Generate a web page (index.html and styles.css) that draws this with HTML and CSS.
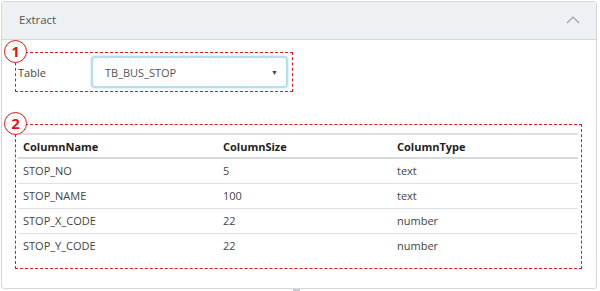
FILE: index.html
```html
<!DOCTYPE html>
<html lang="en">

<head>
    <meta charset="UTF-8">
    <meta name="viewport" content="width=device-width, initial-scale=1.0">
    <title>Extract</title>

    <link rel="stylesheet" href="styles.css">
</head>

<body>
    <div class="panel">
        <div class="panel-header">
            <span>Extract</span>
            <svg class="toggle" width="14" height="8" viewBox="0 0 14 8">
                <polyline points="1,7 7,1 13,7" fill="none" stroke="#9aa3ad" stroke-width="1.2" />
            </svg>
        </div>

        <div class="panel-body">
            <!-- 1: table select -->
            <div class="mark mark-table">
                <span class="badge">1</span>
                <label class="field-label">Table</label>
                <div class="select">
                    <span>TB_BUS_STOP</span>
                    <span class="caret">&#9660;</span>
                </div>
            </div>

            <!-- 2: column list -->
            <div class="mark mark-columns">
                <span class="badge">2</span>
                <table class="grid">
                    <thead>
                        <tr>
                            <th class="c1">ColumnName</th>
                            <th class="c2">ColumnSize</th>
                            <th>ColumnType</th>
                        </tr>
                    </thead>
                    <tbody>
                        <tr>
                            <td>STOP_NO</td>
                            <td>5</td>
                            <td>text</td>
                        </tr>
                        <tr>
                            <td>STOP_NAME</td>
                            <td>100</td>
                            <td>text</td>
                        </tr>
                        <tr>
                            <td>STOP_X_CODE</td>
                            <td>22</td>
                            <td>number</td>
                        </tr>
                        <tr>
                            <td>STOP_Y_CODE</td>
                            <td>22</td>
                            <td>number</td>
                        </tr>
                    </tbody>
                </table>
            </div>
        </div>
    </div>
    <div class="handle"></div>
</body>

</html>
```

FILE: styles.css
```css
* {
    margin: 0;
    padding: 0;
    box-sizing: border-box;
}

body {
    padding: 1px 3px 0 1px;
    font-family: "Open Sans", "Noto Sans", sans-serif;
    font-size: 11px;
    color: #444;
    background: #fff;
}

.panel {
    width: 596px;
    height: 288px;
    border: 1px solid #d5d9de;
    border-radius: 3px;
    overflow: hidden;
}

.panel-header {
    height: 38px;
    padding: 0 16px 2px 17px;
    background-color: #eef1f4;
    border-bottom: 1px solid #d5d9de;
    color: #555;
    font-size: 11.5px;

    display: flex;
    justify-content: space-between;
    align-items: center;
}

.panel-body {
    padding: 12px 15px 0 13px;
}

.mark {
    position: relative;
}

.badge {
    position: absolute;
    top: -13px;
    left: -12px;
    width: 23px;
    height: 23px;
    border: 1.5px solid #e8141a;
    border-radius: 50%;
    background: #fff;
    color: #e8141a;
    font-weight: bold;
    font-size: 15px;
    line-height: 20px;
    text-align: center;
}

.mark-table {
    width: 278px;
    height: 40px;
    padding: 3px 4px 3px 2px;
    border: 1px dashed #e8141a;

    display: flex;
    align-items: center;
}

.field-label {
    width: 73px;
    color: #444;
}

.select {
    flex: 1;
    height: 32px;
    padding: 0 8px 0 12px;
    border: 2px solid #b5def0;
    border-radius: 4px;
    box-shadow: 0 0 2px rgba(102, 175, 233, 0.6);
    color: #555;

    display: flex;
    justify-content: space-between;
    align-items: center;
}

.caret {
    font-size: 7px;
    color: #444;
}

.mark-columns {
    margin-top: 32px;
    width: 567px;
    height: 145px;
    padding: 8px 3px 0 2px;
    border: 1px dashed #e8141a;
}

.grid {
    width: 100%;
    border-collapse: collapse;
    border-top: 2px solid #dde0e5;
}

.grid th,
.grid td {
    text-align: left;
    padding: 0 5px;
}

.grid th {
    height: 24px;
    color: #222;
    font-weight: bold;
    border-bottom: 2px solid #d5d9de;
}

.grid td {
    height: 25px;
    color: #444;
    border-bottom: 1px solid #dde0e5;
}

.grid tbody tr:last-child td {
    border-bottom: none;
}

.grid .c1 {
    width: 200px;
}

.grid .c2 {
    width: 174px;
}

.handle {
    width: 7px;
    height: 3px;
    margin: 0 auto;
    transform: translateX(-3px);
    background: #c8ccd2;
}
```
